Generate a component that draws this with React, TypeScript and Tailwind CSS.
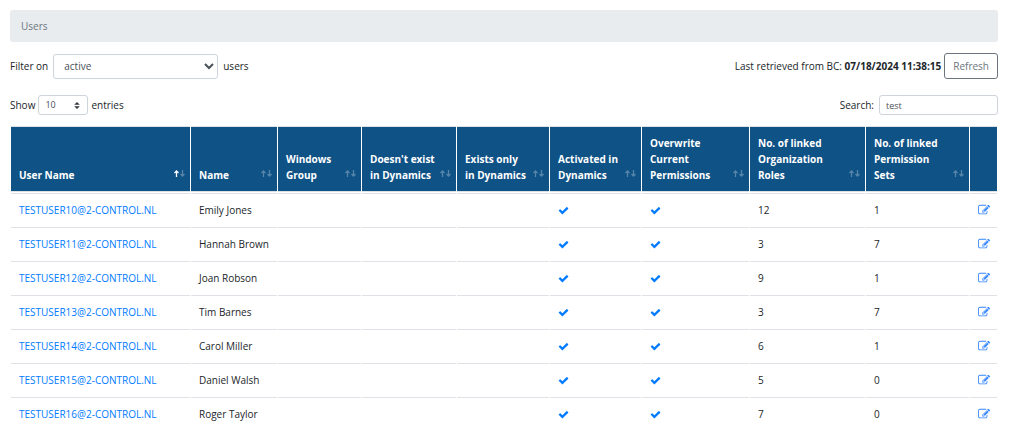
import { useState } from "react";

type SortState = "asc" | "none";

const COLUMNS: { label: string; width: string; sort: SortState }[] = [
  { label: "User Name", width: "", sort: "asc" },
  { label: "Name", width: "w-[86px]", sort: "none" },
  { label: "Windows\nGroup", width: "w-[83px]", sort: "none" },
  { label: "Doesn't exist\nin Dynamics", width: "w-[94px]", sort: "none" },
  { label: "Exists only\nin Dynamics", width: "w-[92px]", sort: "none" },
  { label: "Activated in\nDynamics", width: "w-[91px]", sort: "none" },
  { label: "Overwrite\nCurrent\nPermissions", width: "w-[107px]", sort: "none" },
  { label: "No. of linked\nOrganization\nRoles", width: "w-[115px]", sort: "none" },
  { label: "No. of linked\nPermission\nSets", width: "w-[103px]", sort: "none" },
];

const USERS = [
  { login: "TESTUSER10@2-CONTROL.NL", name: "Emily Jones", roles: 12, sets: 1 },
  { login: "TESTUSER11@2-CONTROL.NL", name: "Hannah Brown", roles: 3, sets: 7 },
  { login: "TESTUSER12@2-CONTROL.NL", name: "Joan Robson", roles: 9, sets: 1 },
  { login: "TESTUSER13@2-CONTROL.NL", name: "Tim Barnes", roles: 3, sets: 7 },
  { login: "TESTUSER14@2-CONTROL.NL", name: "Carol Miller", roles: 6, sets: 1 },
  { login: "TESTUSER15@2-CONTROL.NL", name: "Daniel Walsh", roles: 5, sets: 0 },
  { login: "TESTUSER16@2-CONTROL.NL", name: "Roger Taylor", roles: 7, sets: 0 },
];

function CheckIcon() {
  return (
    <svg viewBox="0 0 1792 1792" className="size-[11px] fill-[#007bff]" aria-hidden="true">
      <path d="M1671 566q0 40-28 68l-724 724-136 136q-28 28-68 28t-68-28l-136-136-362-362q-28-28-28-68t28-68l136-136q28-28 68-28t68 28l294 295 656-657q28-28 68-28t68 28l136 136q28 28 28 68z" />
    </svg>
  );
}

function EditIcon() {
  return (
    <svg viewBox="0 0 1792 1792" className="size-3 fill-[#3385ff]" aria-hidden="true">
      <path d="M888 1184l116-116-152-152-116 116v56h96v96h56zm440-720q-16-16-33 1l-350 350q-17 17-1 33t33-1l350-350q17-17 1-33zm80 594v190q0 119-84.5 203.5t-203.5 84.5h-832q-119 0-203.5-84.5t-84.5-203.5v-832q0-119 84.5-203.5t203.5-84.5h832q63 0 117 25 15 7 18 23 3 17-9 29l-49 49q-14 14-32 8-23-6-45-6h-832q-66 0-113 47t-47 113v832q0 66 47 113t113 47h832q66 0 113-47t47-113v-126q0-13 9-22l64-64q15-15 35-7t20 29zm-96-738l288 288-672 672h-288v-288zm444 132l-92 92-288-288 92-92q28-28 68-28t68 28l152 152q28 28 28 68t-28 68z" />
    </svg>
  );
}

function SortIcon({ sort }: { sort: SortState }) {
  return (
    <svg viewBox="0 0 11 7" className="h-[7px] w-[11px] shrink-0 fill-none stroke-white" aria-hidden="true">
      <path d="M2.5 7V1M0.5 3L2.5 1L4.5 3" strokeWidth="1.3" opacity={sort === "asc" ? 1 : 0.3} />
      <path d="M8.5 0V6M6.5 4L8.5 6L10.5 4" strokeWidth="1.3" opacity={0.3} />
    </svg>
  );
}

export default function App() {
  const [filter, setFilter] = useState("active");
  const [length, setLength] = useState("10");
  const [search, setSearch] = useState("test");

  return (
    <main className="h-screen overflow-hidden bg-white px-3 pt-[10px] pl-[10px] font-['Open_Sans','Noto_Sans',sans-serif] text-[10px] leading-4 text-[#212529]">
      <nav aria-label="Breadcrumb" className="rounded-[3px] bg-[#e9ecef] px-[11px] py-2 text-[#6c757d]">
        Users
      </nav>

      <div className="mt-[11px] flex items-center justify-between">
        <div className="flex items-center">
          <label htmlFor="filter">Filter on</label>
          <select
            id="filter"
            value={filter}
            onChange={(e) => setFilter(e.target.value)}
            className="mx-[5px] h-[25px] w-[165px] rounded-[3px] border border-[#ced4da] bg-white px-[6px] text-[#495057]"
          >
            <option value="active">active</option>
            <option value="inactive">inactive</option>
            <option value="all">all</option>
          </select>
          <span>users</span>
        </div>
        <div className="flex items-center gap-[3px]">
          <span>
            Last retrieved from BC: <b className="font-bold">07/18/2024 11:38:15</b>
          </span>
          <button type="button" className="h-[26px] rounded-[3px] border border-[#6c757d] px-2 text-[#6c757d]">
            Refresh
          </button>
        </div>
      </div>

      <div className="mt-4 flex items-center justify-between">
        <label className="flex items-center gap-[3px]">
          Show
          <span className="relative flex">
            <select
              value={length}
              onChange={(e) => setLength(e.target.value)}
              className="h-5 w-[50px] appearance-none rounded-[3px] border border-[#ced4da] bg-white px-[6px] text-[9px] leading-4 text-[#495057]"
            >
              <option>10</option>
              <option>25</option>
              <option>50</option>
              <option>100</option>
            </select>
            <svg viewBox="0 0 4 5" className="pointer-events-none absolute top-[7px] right-2 h-[7px] w-[6px] fill-[#343a40]" aria-hidden="true">
              <path d="M2 0L0 2h4zm0 5L0 3h4z" />
            </svg>
          </span>
          entries
        </label>
        <label className="flex items-center gap-[5px]">
          Search:
          <input
            type="text"
            value={search}
            onChange={(e) => setSearch(e.target.value)}
            className="h-5 w-[119px] rounded-[3px] border border-[#ced4da] bg-white px-[6px] text-[9px] leading-4 text-[#495057]"
          />
        </label>
      </div>

      <table className="mt-[10px] w-full table-fixed border-separate border-spacing-px text-left">
        <thead>
          <tr>
            {COLUMNS.map((col) => (
              <th
                key={col.label}
                className={`${col.width} border-y border-[#dee2e6] bg-[#0f5286] bg-clip-padding p-0 align-bottom text-white`}
              >
                <button
                  type="button"
                  className="flex w-full items-end justify-between py-2 pr-[5px] pl-2 text-left font-bold whitespace-pre"
                >
                  {col.label}
                  <span className="pb-[6px]">
                    <SortIcon sort={col.sort} />
                  </span>
                </button>
              </th>
            ))}
            <th className="w-[27px] border-y border-[#dee2e6] bg-[#0f5286] bg-clip-padding p-0" aria-label="Edit" />
          </tr>
        </thead>
        <tbody>
          {USERS.map((user) => (
            <tr key={user.login} className="*:border-t *:border-[#dee2e6] *:px-2 *:py-2">
              <td className="whitespace-nowrap">
                <a href="#" className="text-[#007bff]">{user.login}</a>
              </td>
              <td className="whitespace-nowrap">{user.name}</td>
              <td />
              <td />
              <td />
              <td><CheckIcon /></td>
              <td><CheckIcon /></td>
              <td>{user.roles}</td>
              <td>{user.sets}</td>
              <td>
                <a href="#" aria-label={`Edit ${user.name}`} className="block">
                  <EditIcon />
                </a>
              </td>
            </tr>
          ))}
        </tbody>
      </table>
    </main>
  );
}
